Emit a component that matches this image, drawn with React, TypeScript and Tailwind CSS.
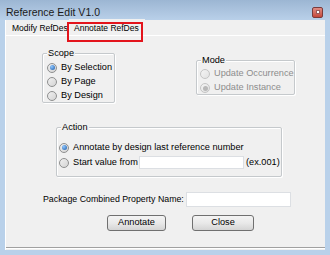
import React from "react";

const font = { fontFamily: '"Liberation Sans", Arial, sans-serif' };

function Radio({ checked, disabled }: { checked?: boolean; disabled?: boolean }) {
  return (
    <span
      className={
        "relative inline-flex items-center justify-center w-[10px] h-[10px] rounded-full border shrink-0 " +
        (disabled
          ? "border-[#c4c4c4] bg-gradient-to-br from-[#f4f4f4] to-[#e2e2e2]"
          : "border-[#8e8f8f] bg-gradient-to-br from-[#f0f0f0] to-[#d4d4d4]")
      }
    >
      {checked && (
        <span
          className={
            "w-[5px] h-[5px] rounded-full " +
            (disabled
              ? "bg-[#b8b8b8]"
              : "bg-[radial-gradient(circle_at_35%_35%,#8fc7ff,#1c5aa8)]")
          }
        />
      )}
    </span>
  );
}

function Group({
  label,
  className,
  children,
}: {
  label: string;
  className: string;
  children: React.ReactNode;
}) {
  return (
    <div
      className={
        "relative border border-[#c5c9cc] rounded-[2px] shadow-[inset_1px_1px_0_#ffffff,1px_1px_0_#ffffff] " +
        className
      }
    >
      <span className="absolute left-[4px] top-[-7px] px-[1px] bg-[#f0f0f0] text-[9.2px] leading-[12px] text-black">
        {label}
      </span>
      {children}
    </div>
  );
}

function Row({
  checked,
  disabled,
  label,
  className,
  labelClass,
  children,
}: {
  checked?: boolean;
  disabled?: boolean;
  label: string;
  className?: string;
  labelClass?: string;
  children?: React.ReactNode;
}) {
  return (
    <div className={"flex items-center " + (className || "")}>
      <Radio checked={checked} disabled={disabled} />
      <span
        className={
          "ml-[4px] text-[9.2px] whitespace-nowrap " +
          (disabled ? "text-[#8d8d8d] " : "text-black ") +
          (labelClass || "")
        }
      >
        {label}
      </span>
      {children}
    </div>
  );
}

export default function App() {
  return (
    <div
      className="w-[330px] h-[255px] flex flex-col bg-[#b9d1ea] overflow-hidden"
      style={font}
    >
      {/* Title bar */}
      <div className="h-[20px] flex items-center justify-between bg-gradient-to-b from-[#9cb6d3] to-[#b9d0e9] pl-[6px] pr-[7px]">
        <span className="text-[10.5px] text-[#1a1a1a] leading-none mt-[5px]">Reference Edit V1.0</span>
        <div className="w-[11px] h-[11px] mt-[4px] rounded-[2px] border border-[#7a3b3b] bg-gradient-to-b from-[#e08c84] to-[#c4463a] flex items-center justify-center">
          <span className="w-[4px] h-[4px] bg-white border border-[#9a5a5a]" />
        </div>
      </div>

      {/* Client */}
      <div className="relative flex-1 mx-[5px] mb-[5px] bg-[#f0f0f0] border-l border-white flex flex-col">
        {/* Tab strip */}
        <div className="h-[16px] flex items-end border-b border-white">
          <div className="w-[63px] h-[14px] pl-[6px] flex items-center text-[8.5px] text-black whitespace-nowrap">
            Modify RefDes
          </div>
          <div className="h-[16px] pl-[5px] pr-[6px] flex items-start pt-[3px] text-[8.5px] text-black bg-[#f0f0f0] whitespace-nowrap">
            Annotate RefDes
          </div>
        </div>
        {/* Red annotation box */}
        <div className="absolute left-[61px] top-[2px] w-[76px] h-[20px] border-2 border-[#e3141c]" />

        {/* Tab panel */}
        <div className="flex-1 flex flex-col border-b border-[#a0a0a0] shadow-[0_1px_0_#ffffff] mb-[2px]">
          {/* Row 1 */}
          <div className="flex items-start mt-[17px] ml-[36px]">
            <Group label="Scope" className="w-[73px] h-[50px] pt-[6px] pl-[4px]">
              <Row checked label="By Selection" className="h-[15px]" />
              <Row label="By Page" className="h-[14px]" />
              <Row label="By Design" className="h-[14px]" />
            </Group>
            <Group label="Mode" className="ml-[81px] mt-[7px] w-[99px] h-[35px] pt-[6px] pl-[3px]">
              <Row disabled label="Update Occurrence" className="h-[14px]" />
              <Row disabled checked label="Update Instance" className="h-[14px]" />
            </Group>
          </div>

          {/* Action */}
          <Group label="Action" className="mt-[24px] ml-[50px] w-[226px] h-[50px] pt-[12px] pl-[2px]">
            <Row checked label="Annotate by design last reference number" className="h-[15px]" />
            <Row label="Start value from" className="h-[15px]" labelClass="w-[66px]">
              <div className="w-[105px] h-[13px] bg-white border border-[#dcdfe3]" />
              <span className="ml-[2px] text-[9.2px] text-black">(ex.001)</span>
            </Row>
          </Group>

          {/* Package */}
          <div className="flex items-center mt-[15px] ml-[37px] h-[15px]">
            <span className="text-[8.8px] text-black whitespace-nowrap w-[143px]">
              Package Combined Property Name:
            </span>
            <div className="w-[105px] h-[15px] bg-white border border-[#dcdfe3]" />
          </div>

          {/* Buttons */}
          <div className="flex mt-[8px] ml-[101px]">
            <button className="w-[59px] h-[16px] rounded-[3px] border border-[#707070] bg-gradient-to-b from-[#f4f4f4] via-[#e9e9e9] to-[#d4d4d4] text-[9.2px] text-black leading-none">
              Annotate
            </button>
            <button className="ml-[26px] w-[62px] h-[16px] rounded-[3px] border border-[#707070] bg-gradient-to-b from-[#f4f4f4] via-[#e9e9e9] to-[#d4d4d4] text-[9.2px] text-black leading-none">
              Close
            </button>
          </div>
        </div>
      </div>
    </div>
  );
}
